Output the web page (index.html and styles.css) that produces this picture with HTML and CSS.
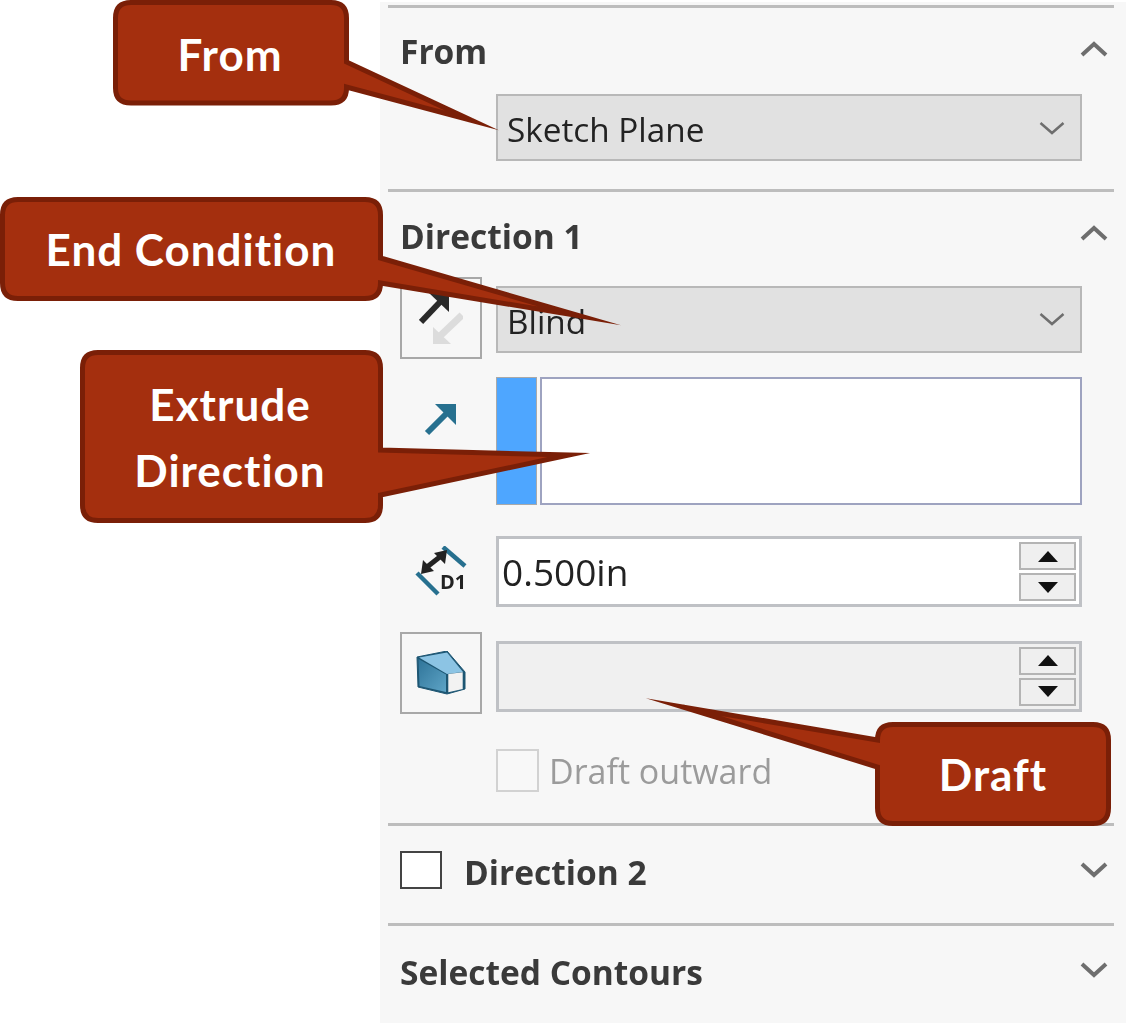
FILE: index.html
```html
<!DOCTYPE html>
<html lang="en">
<head>
  <meta charset="UTF-8" />
  <title>Extrude</title>
  <link rel="stylesheet" href="styles.css">
</head>
<body>
  <div class="page">
    <div class="panel">

      <section class="group group-from">
        <div class="group-head">
          <span class="group-title">From</span>
          <svg class="chevron" viewBox="0 0 28 16"><path d="M2 14 L14 3 L26 14"/></svg>
        </div>
        <div class="row">
          <div class="row-icon"></div>
          <div class="combo">
            <span>Sketch Plane</span>
            <svg class="combo-arrow" viewBox="0 0 26 14"><path d="M1.5 2 L13 12 L24.5 2"/></svg>
          </div>
        </div>
      </section>

      <section class="group group-dir1">
        <div class="group-head">
          <span class="group-title">Direction 1</span>
          <svg class="chevron" viewBox="0 0 28 16"><path d="M2 14 L14 3 L26 14"/></svg>
        </div>

        <div class="row row-tall row-blind">
          <div class="row-icon icon-btn">
            <svg width="44" height="56" viewBox="0 0 44 56">
              <path d="M43 25 L21 46" stroke="#dcdcdc" stroke-width="7" fill="none"/>
              <path d="M14 54 L14 37 L32 54 Z" fill="#dcdcdc"/>
              <path d="M2 32 L22 11" stroke="#2a2a2a" stroke-width="6" fill="none"/>
              <path d="M10 3 L30 3 L30 22 Z" fill="#2a2a2a"/>
            </svg>
          </div>
          <div class="combo">
            <span>Blind</span>
            <svg class="combo-arrow" viewBox="0 0 26 14"><path d="M1.5 2 L13 12 L24.5 2"/></svg>
          </div>
        </div>

        <div class="row row-list">
          <div class="row-icon icon-top">
            <svg width="34" height="34" viewBox="0 0 34 34">
              <path d="M3 31 L22 12" stroke="#27708f" stroke-width="6" fill="none"/>
              <path d="M11 2 L32 2 L32 23 Z" fill="#27708f"/>
            </svg>
          </div>
          <div class="swatch"></div>
          <div class="listbox"></div>
        </div>

        <div class="row row-spin">
          <div class="row-icon">
            <svg width="54" height="52" viewBox="0 0 54 52">
              <path d="M29 1 L51 20" stroke="#27708f" stroke-width="4.5" fill="none"/>
              <path d="M3 27 L24 48" stroke="#27708f" stroke-width="4.5" fill="none"/>
              <path d="M13 21 L27 10" stroke="#222" stroke-width="5" fill="none"/>
              <path d="M7 28 L9 14 L20 25 Z M33 4 L31 18 L20 7 Z" fill="#222"/>
              <text x="26" y="43" class="d1-text">D1</text>
            </svg>
          </div>
          <div class="spin">
            <span class="spin-value">0.500in</span>
            <div class="spin-btns">
              <div class="spin-btn"><span class="tri-up"></span></div>
              <div class="spin-btn"><span class="tri-down"></span></div>
            </div>
          </div>
        </div>

        <div class="row row-tall row-draft">
          <div class="row-icon icon-btn">
            <svg width="50" height="44" viewBox="0 0 50 44">
              <defs>
                <linearGradient id="draftFace" x1="0" y1="0" x2="1" y2="1">
                  <stop offset="0" stop-color="#2f7499"/>
                  <stop offset="1" stop-color="#5ea4c6"/>
                </linearGradient>
              </defs>
              <path d="M1 6 L31 0 L49 21 L49 38 L31 43 L2 36 Z" fill="#1d5673" stroke="#1d5673" stroke-linejoin="round"/>
              <path d="M3 6.5 L31 1.5 L47 21 L31 23 Z" fill="#8cc4e4"/>
              <path d="M2.5 8 L30 23.5 L30 41 L3.5 35 Z" fill="url(#draftFace)"/>
              <path d="M32.3 23 L46.7 21.3 L46.7 38 L32.3 41.3 Z" fill="#f2f2f2"/>
            </svg>
          </div>
          <div class="spin spin-off">
            <span class="spin-value"></span>
            <div class="spin-btns">
              <div class="spin-btn"><span class="tri-up"></span></div>
              <div class="spin-btn"><span class="tri-down"></span></div>
            </div>
          </div>
        </div>

        <div class="row row-check">
          <div class="row-icon"></div>
          <div class="check check-off"></div>
          <span class="check-label">Draft outward</span>
        </div>
      </section>

      <section class="group group-dir2">
        <div class="group-head">
          <div class="check check-on"></div>
          <span class="group-title">Direction 2</span>
          <svg class="chevron" viewBox="0 0 28 16"><path d="M2 2 L14 13 L26 2"/></svg>
        </div>
      </section>

      <section class="group group-contours">
        <div class="group-head">
          <span class="group-title">Selected Contours</span>
          <svg class="chevron" viewBox="0 0 28 16"><path d="M2 2 L14 13 L26 2"/></svg>
        </div>
      </section>
    </div>

    <!-- callouts lie over the panel -->
    <svg class="callouts" width="1126" height="1023" viewBox="0 0 1126 1023">
      <path class="bubble" d="M131 2.5 H331 Q346.5 2.5 346.5 18 V62 L472 120.5 L346.5 87 V88 Q346.5 103 331 103 H131 Q115.5 103 115.5 88 V18 Q115.5 2.5 131 2.5 Z"/>
      <text class="bubble-text" x="230" y="71">From</text>

      <path class="bubble" d="M18 199.5 H365 Q380.5 199.5 380.5 215 V258 L580 316 L380.5 283 Q380.5 298.5 365 298.5 H18 Q2.5 298.5 2.5 283 V215 Q2.5 199.5 18 199.5 Z"/>
      <text class="bubble-text" x="191" y="266">End Condition</text>

      <path class="bubble" d="M98 352.5 H365 Q380.5 352.5 380.5 368 V450 L569 455 L380.5 495 V505 Q380.5 520.5 365 520.5 H98 Q82.5 520.5 82.5 505 V368 Q82.5 352.5 98 352.5 Z"/>
      <text class="bubble-text" x="230" y="421">Extrude</text>
      <text class="bubble-text" x="230" y="487">Direction</text>

      <path class="bubble" d="M893 724.5 H1093 Q1108.5 724.5 1108.5 740 V808 Q1108.5 823.5 1093 823.5 H893 Q877.5 823.5 877.5 808 V767 L683 707 L877.5 740 Q877.5 724.5 893 724.5 Z"/>
      <text class="bubble-text" x="993" y="791">Draft</text>
    </svg>
  </div>
</body>
</html>
```

FILE: styles.css
```css
html, body {
  margin: 0;
  padding: 0;
  background: #fff;
}
.page {
  position: relative;
  width: 1126px;
  height: 1023px;
  overflow: hidden;
  font-family: "Open Sans", "Noto Sans", sans-serif;
  color: #333;
}
.panel {
  margin: 2px 0 0 380px;
  height: 1021px;
  background: #f7f7f7;
  padding: 3px 12px 0 8px;
  box-sizing: border-box;
  filter: blur(0.6px);
}
.group {
  border-top: 3px solid #bdbdbd;
  padding: 0 6px 0 12px;
}
.group-head {
  display: flex;
  align-items: center;
  justify-content: space-between;
}
.group-title {
  font-size: 33.5px;
  font-weight: 700;
  color: #3a3a3a;
}
.chevron {
  width: 28px;
  height: 16px;
  margin: 0 0 5px;
}
.chevron path, .combo-arrow path {
  fill: none;
  stroke: #6e6e6e;
  stroke-width: 4;
}
.combo-arrow path {
  stroke-width: 2.5;
}

.group-from { height: 184px; box-sizing: border-box; }
.group-from .group-head { height: 86px; }
.group-dir1 { height: 634px; box-sizing: border-box; }
.group-dir1 .group-head { height: 85px; padding-top: 2px; box-sizing: border-box; }
.group-dir2 { height: 100px; box-sizing: border-box; }
.group-dir2 .group-head { height: 92px; justify-content: flex-start; }
.group-dir2 .chevron { margin-left: auto; }
.group-contours .group-head { height: 92px; }

.row {
  display: flex;
  align-items: center;
  margin-right: 26px;
}
.row-icon {
  width: 82px;
  margin-right: 14px;
  flex: none;
  display: flex;
  align-items: center;
  justify-content: center;
  box-sizing: border-box;
}
.icon-btn {
  height: 82px;
  border: 2px solid #a8a8a8;
}
.icon-top {
  align-self: flex-start;
  padding-top: 25px;
}
.row-tall { height: 82px; }
.row-blind .combo { margin-top: 2px; }
.row-list { height: 128px; margin-top: 18px; }
.row-spin { height: 71px; margin-top: 31px; }
.row-draft { margin-top: 25px; }
.row-draft .spin { margin-top: 6px; }
.row-check { height: 43px; margin-top: 35px; }

.combo {
  flex: 1;
  height: 67px;
  background: #e1e1e1;
  border: 2px solid #b8b8b8;
  box-sizing: border-box;
  display: flex;
  align-items: center;
  justify-content: space-between;
  padding: 3px 15px 0 9px;
  font-size: 33.3px;
  color: #222;
}
.combo-arrow {
  width: 26px;
  height: 14px;
  margin-top: -3px;
}

.swatch {
  width: 41px;
  height: 128px;
  background: #4ea6ff;
  border: 1px solid #a9a9a9;
  box-sizing: border-box;
  margin-right: 3px;
}
.listbox {
  flex: 1;
  height: 128px;
  background: #fff;
  border: 2px solid #9ea3c0;
  box-sizing: border-box;
}

.spin {
  flex: 1;
  height: 71px;
  background: #fff;
  border: 3px solid #bfc1c5;
  box-sizing: border-box;
  display: flex;
  align-items: center;
  justify-content: space-between;
  padding: 0 3px 0 3px;
  font-size: 37px;
  color: #222;
}
.spin-off {
  background: #f0f0f0;
}
.spin-btns {
  display: flex;
  flex-direction: column;
  gap: 3px;
}
.spin-btn {
  width: 57px;
  height: 28px;
  background: #efefef;
  border: 2px solid #b4b4b4;
  box-sizing: border-box;
  display: flex;
  align-items: center;
  justify-content: center;
}
.tri-up, .tri-down {
  width: 0;
  height: 0;
  border-left: 10px solid transparent;
  border-right: 10px solid transparent;
}
.tri-up { border-bottom: 11px solid #111; }
.tri-down { border-top: 11px solid #111; }

.check {
  box-sizing: border-box;
}
.check-off {
  width: 43px;
  height: 43px;
  background: #f8f8f8;
  border: 2px solid #d2d2d2;
}
.check-on {
  width: 42px;
  height: 38px;
  background: #fff;
  border: 2px solid #444;
  margin-right: 22px;
  margin-bottom: 4px;
}
.check-label {
  margin-left: 10px;
  font-size: 34px;
  color: #9b9b9b;
}

.d1-text {
  font-family: "Open Sans", sans-serif;
  font-size: 20px;
  font-weight: 700;
  fill: #222;
}

.callouts {
  position: absolute;
  left: 0;
  top: 0;
}
.bubble {
  fill: #a42f0e;
  stroke: #7a1f07;
  stroke-width: 5;
  stroke-linejoin: miter;
  stroke-miterlimit: 40;
}
.bubble-text {
  font-family: "Lato", "Open Sans", sans-serif;
  font-size: 44px;
  font-weight: 700;
  letter-spacing: 1px;
  fill: #fff;
  text-anchor: middle;
}
```
